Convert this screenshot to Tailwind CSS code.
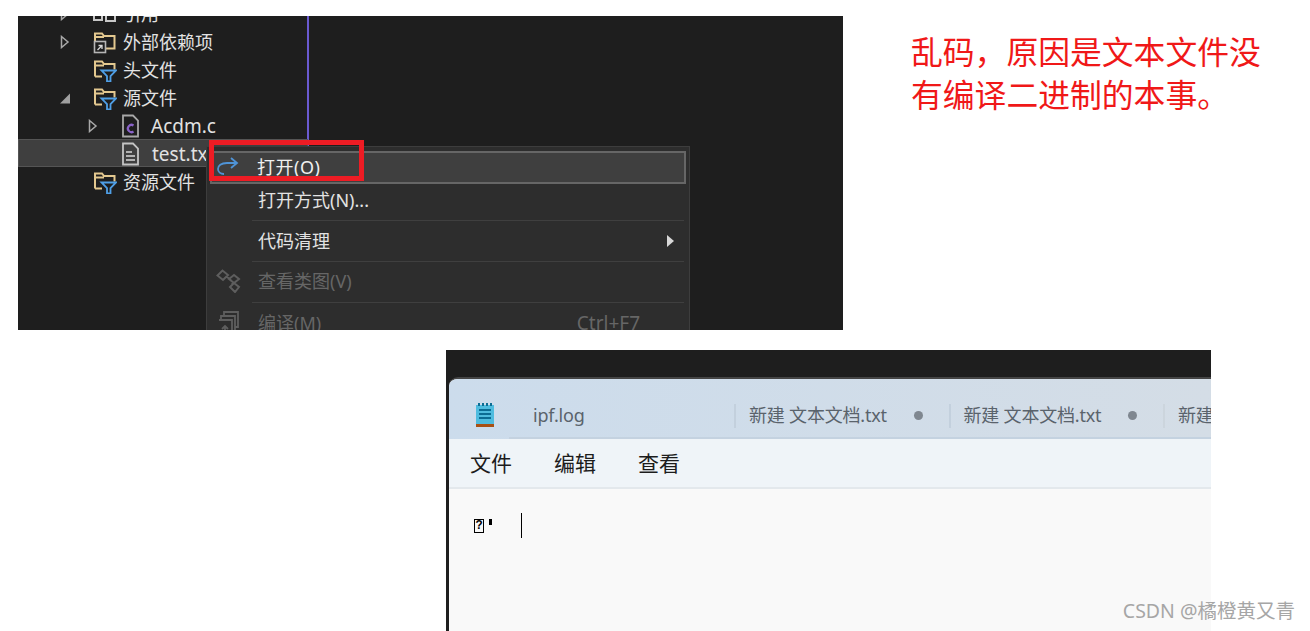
<!DOCTYPE html>
<html lang="zh">
<head>
<meta charset="utf-8">
<script src="https://cdn.jsdelivr.net/npm/@tailwindcss/browser@4"></script>
</head>
<body class="relative h-[631px] w-[1310px] overflow-hidden bg-white font-['Noto_Sans','Noto_Sans_CJK_SC',sans-serif]">
<div class="flex pt-[16px] pl-[18px]">
  <!-- IDE screenshot -->
  <div class="relative h-[314px] w-[825px] overflow-hidden bg-[#1e1e1e] text-[18px] leading-[28px] text-[#e2e2e2]">
    <div class="-mt-[16px] h-[346px] w-[291px] border-r-2 border-[#6a5ad0]">
      <!-- 引用 -->
      <div class="flex h-[28px] items-center pl-[42px]">
        <svg class="h-[14px] w-[10px]" viewBox="0 0 10 14"><path d="M1.5 1.5 8 7 1.5 12.5Z" fill="none" stroke="#a8a8a8" stroke-width="1.5"/></svg>
        <svg class="ml-[23px] h-[24px] w-[24px]" viewBox="0 0 24 24"><path d="M1 10h8v8H1zM13 10h9v9h-9z" fill="none" stroke="#c8c8c8" stroke-width="2"/></svg>
        <span class="ml-[6px]">引用</span>
      </div>
      <!-- 外部依赖项 -->
      <div class="flex h-[28px] items-center pl-[42px]">
        <svg class="h-[14px] w-[10px]" viewBox="0 0 10 14"><path d="M1.5 1.5 8 7 1.5 12.5Z" fill="none" stroke="#a8a8a8" stroke-width="1.5"/></svg>
        <svg class="ml-[23px] h-[24px] w-[24px]" viewBox="0 0 24 24"><path d="M2 13V3.500h7l2 2.500h10.500v12.500H13M2 7h9" fill="none" stroke="#e3c88f" stroke-width="2"/><rect x="1.500" y="11.500" width="11" height="11" fill="#1e1e1e" stroke="#b5b5b5" stroke-width="1.6"/><path d="M4.500 20l4-4M5.500 15.500h3.500V19" fill="none" stroke="#d8d8d8" stroke-width="1.3"/></svg>
        <span class="ml-[6px]">外部依赖项</span>
      </div>
      <!-- 头文件 -->
      <div class="flex h-[28px] items-center pl-[42px]">
        <span class="w-[10px]"></span>
        <svg class="ml-[23px] h-[24px] w-[24px]" viewBox="0 0 24 24"><path d="M2 18.500V3.500h7l2 2.500h10.500v5.500M2 18.500h7M2 7.500h9" fill="none" stroke="#e3c88f" stroke-width="2"/><path d="M8.500 12.500h14.500l-5.500 5.500v5.500h-3.500v-5.500Z" fill="#1e1e1e" stroke="#4f9fe6" stroke-width="1.8"/></svg>
        <span class="ml-[6px]">头文件</span>
      </div>
      <!-- 源文件 -->
      <div class="flex h-[28px] items-center pl-[42px]">
        <svg class="h-[14px] w-[10px]" viewBox="0 0 10 14"><path d="M0 12.500 10 2.500V12.500Z" fill="#a0a0a0"/></svg>
        <svg class="ml-[23px] h-[24px] w-[24px]" viewBox="0 0 24 24"><path d="M2 18.500V3.500h7l2 2.500h10.500v5.500M2 18.500h7M2 7.500h9" fill="none" stroke="#e3c88f" stroke-width="2"/><path d="M8.500 12.500h14.500l-5.500 5.500v5.500h-3.500v-5.500Z" fill="#1e1e1e" stroke="#4f9fe6" stroke-width="1.8"/></svg>
        <span class="ml-[6px]">源文件</span>
      </div>
      <!-- Acdm.c -->
      <div class="flex h-[28px] items-center pl-[70px]">
        <svg class="h-[14px] w-[10px]" viewBox="0 0 10 14"><path d="M1.5 1.5 8 7 1.5 12.5Z" fill="none" stroke="#a8a8a8" stroke-width="1.5"/></svg>
        <svg class="ml-[23px] h-[24px] w-[24px]" viewBox="0 0 24 24"><path d="M2 1.500h10l5 5v16H2Z" fill="none" stroke="#a8a8a8" stroke-width="1.800"/><path d="M12.500 11.500a3.600 3.600 0 1 0 0 6" fill="none" stroke="#8a63c9" stroke-width="2.200"/></svg>
        <span class="ml-[6px] text-[19px]">Acdm.c</span>
      </div>
      <!-- test.txt -->
      <div class="relative -top-px -mr-px flex h-[28px] items-center border border-[#555555] bg-[#3f3f3f] pt-px pl-[69px]">
        <span class="w-[10px]"></span>
        <svg class="ml-[23px] h-[24px] w-[24px]" viewBox="0 0 24 24"><path d="M2 1.500h10l5 5v16H2Z" fill="none" stroke="#c4c4c4" stroke-width="1.800"/><path d="M5 10h6M5 14h9M5 18h9" stroke="#d8d8d8" stroke-width="1.600"/></svg>
        <span class="ml-[7px] text-[19px]">test.txt</span>
      </div>
      <!-- 资源文件 -->
      <div class="flex h-[28px] items-center pl-[42px]">
        <span class="w-[10px]"></span>
        <svg class="ml-[23px] h-[24px] w-[24px]" viewBox="0 0 24 24"><path d="M2 18.500V3.500h7l2 2.500h10.500v5.500M2 18.500h7M2 7.500h9" fill="none" stroke="#e3c88f" stroke-width="2"/><path d="M8.500 12.500h14.500l-5.500 5.500v5.500h-3.500v-5.500Z" fill="#1e1e1e" stroke="#4f9fe6" stroke-width="1.8"/></svg>
        <span class="ml-[6px]">资源文件</span>
      </div>
    </div>

    <!-- context menu -->
    <div class="absolute top-[130px] left-[188px] w-[484px] border border-[#3d3d3d] bg-[#2d2d2d] px-[3px] pt-[4px]">
      <div class="flex h-[33px] items-center border-2 border-[#666666] bg-[#3f3f3f] pb-[2px]">
        <svg class="ml-[4px] h-[20px] w-[24px]" viewBox="0 0 24 20"><path d="M20 6H11C5 6 2 8.500 2 12c0 3 2.500 5 6 5" fill="none" stroke="#4f93d6" stroke-width="1.800"/><path d="M15 1l6 5-6 5" fill="none" stroke="#4f93d6" stroke-width="1.800"/></svg>
        <span class="ml-[17px] tracking-[0.5px] text-[#f0f0f0]">打开(O)</span>
      </div>
      <div class="flex h-[34px] items-center pb-[2px] pl-[48px]">打开方式(N)...</div>
      <div class="mt-[2px] mr-[2px] ml-[42px] h-px bg-[#3f3f3f]"></div>
      <div class="flex h-[40px] items-center justify-between pr-[12px] pl-[48px]">
        <span>代码清理</span>
        <svg class="h-[12px] w-[7px]" viewBox="0 0 7 12"><path d="M0 0l7 6-7 6Z" fill="#d8d8d8"/></svg>
      </div>
      <div class="mr-[2px] ml-[42px] h-px bg-[#3f3f3f]"></div>
      <div class="relative flex h-[40px] items-center pb-[2px] pl-[48px] text-[#666666]">
        <svg class="absolute top-[7px] left-[6px] h-[24px] w-[26px]" viewBox="0 0 26 24"><path d="M1.500 6.500 6.500 1.500 12 6l-5 5ZM13 10l5-4 5 4-5 4ZM14 18l4-4 5 4-4 5ZM11 8l4 3M16 14l1 2" fill="none" stroke="#5e5e5e" stroke-width="2"/></svg>
        查看类图(V)
      </div>
      <div class="mr-[2px] ml-[42px] h-px bg-[#3f3f3f]"></div>
      <div class="relative flex h-[40px] items-center justify-between pr-[46px] pl-[48px] text-[#666666]">
        <svg class="absolute top-[7px] left-[8px] h-[26px] w-[22px]" viewBox="0 0 22 26"><path d="M6 5V2h14v15h-3M3 9V6h14v15M1 10h13v16H1M7 24v-8M4 19l3-3 3 3" fill="none" stroke="#5e5e5e" stroke-width="1.800"/></svg>
        <span>编译(M)</span>
        <span class="text-[19px]">Ctrl+F7</span>
      </div>
    </div>

    <!-- red highlight -->
    <div class="absolute top-[124px] left-[191px] h-[41px] w-[155px] border-[5px] border-[#ed1c24]"></div>
  </div>

  <!-- annotation -->
  <p class="mt-[14px] ml-[68px] w-[358px] text-[31.8px] leading-[43px] text-[#f01818]">乱码，原因是文本文件没有编译二进制的本事。</p>
</div>

<!-- Notepad screenshot -->
<div class="mt-[20px] ml-[446px] h-[281px] w-[765px] overflow-hidden bg-[#1e1e1e] pt-[27px] pl-[3px]">
  <div class="h-full overflow-hidden rounded-tl-[9px] border-t-2 border-[#454545] bg-[#f9f9f9]">
    <div class="flex h-[60px] bg-gradient-to-r from-[#ccdcec] to-[#d4dde6]">
      <div class="flex w-[60px] flex-none items-start pt-[24px] pl-[27px]">
        <svg class="h-[24px] w-[18px]" viewBox="0 0 18 24"><rect x="0" y="2" width="18" height="19" fill="#4fbcdf"/><path d="M3 0v3M7 0v3M11 0v3M15 0v3" stroke="#0d6d93" stroke-width="2"/><path d="M3 7h12M3 11h12M3 15h12" stroke="#0b6c94" stroke-width="2"/><rect y="21" width="18" height="3" fill="#a85014"/></svg>
      </div>
      <div class="flex flex-1 items-center overflow-hidden border-b-2 border-[#c4d2e0] pt-[15px] text-[18px] tracking-[-0.2px] text-[#5a636c]">
        <div class="flex w-[225px] flex-none pl-[24px]">ipf.log</div>
        <div class="flex h-[24px] w-[214.5px] flex-none items-center border-l-2 border-[#c3d0dd] pl-[13px]">
          <span class="whitespace-nowrap">新建 文本文档.txt</span><span class="ml-[27px] h-[9px] w-[9px] rounded-full bg-[#7f8790]"></span>
        </div>
        <div class="flex h-[24px] w-[214.5px] flex-none items-center border-l-2 border-[#c3d0dd] pl-[13px]">
          <span class="whitespace-nowrap">新建 文本文档.txt</span><span class="ml-[27px] h-[9px] w-[9px] rounded-full bg-[#7f8790]"></span>
        </div>
        <div class="flex h-[24px] flex-none items-center border-l-2 border-[#ccd5dd] pl-[13px]">
          <span class="whitespace-nowrap">新建 文本文档.txt</span>
        </div>
      </div>
    </div>
    <div class="flex h-[50px] items-center gap-[42px] border-b-2 border-[#e3e8ec] bg-[#eff4f8] pt-[2px] pl-[21px] text-[21px] text-[#1c1c1c]">
      <span>文件</span><span>编辑</span><span>查看</span>
    </div>
    <div class="flex items-center pt-[24px] pl-[25px]">
      <span class="flex h-[14px] w-[10px] items-center justify-center border-[1.5px] border-black font-['Liberation_Mono',monospace] text-[12px] leading-none font-bold text-black">?</span>
      <span class="-mt-[7px] ml-[5px] h-[6px] w-[3px] bg-black"></span>
      <span class="ml-[29px] h-[25px] w-px bg-black"></span>
    </div>
  </div>
</div>

<!-- watermark -->
<div class="absolute top-[598px] right-[15px] text-[19.5px] leading-[26px] text-[#a6a6a6]">CSDN @橘橙黄又青</div>
</body>
</html>
